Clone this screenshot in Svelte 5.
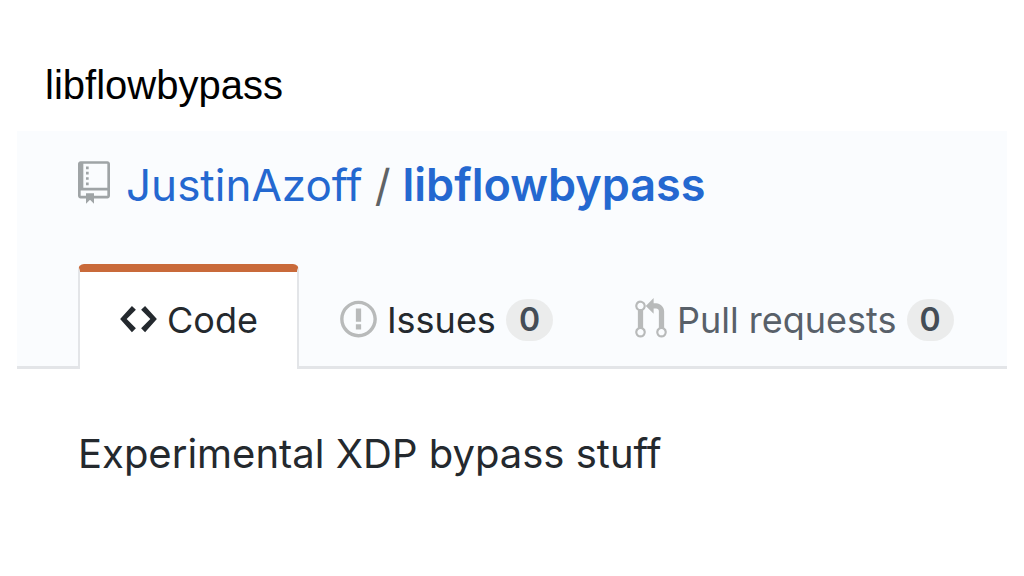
<script lang="ts">
  const owner = 'JustinAzoff';
  const repo = 'libflowbypass';
  const description = 'Experimental XDP bypass stuff';

  const tabs = [
    {
      id: 'code',
      label: 'Code',
      count: null,
      width: 14,
      icon: 'M9.5 3L8 4.5 11.5 8 8 11.5 9.5 13 14 8 9.5 3zm-5 0L0 8l4.5 5L6 11.5 2.5 8 6 4.5 4.5 3z',
    },
    {
      id: 'issues',
      label: 'Issues',
      count: 0,
      width: 14,
      icon: 'M7 2.3c3.14 0 5.7 2.56 5.7 5.7s-2.56 5.7-5.7 5.7A5.71 5.71 0 0 1 1.3 8c0-3.14 2.56-5.7 5.7-5.7zM7 1C3.14 1 0 4.14 0 8s3.14 7 7 7 7-3.14 7-7-3.14-7-7-7zm1 3H6v5h2V4zm0 6H6v2h2v-2z',
    },
    {
      id: 'pulls',
      label: 'Pull requests',
      count: 0,
      width: 12,
      icon: 'M11 11.28V5c-.03-.78-.34-1.47-.94-2.06C9.46 2.35 8.78 2.03 8 2H7V0L4 3l3 3V4h1c.27.02.48.11.69.31.21.2.3.42.31.69v6.28A1.993 1.993 0 0 0 10 15a1.993 1.993 0 0 0 1-3.72zm-1 2.92c-.66 0-1.2-.55-1.2-1.2 0-.65.55-1.2 1.2-1.2.65 0 1.2.55 1.2 1.2 0 .65-.55 1.2-1.2 1.2zM4 3c0-1.11-.89-2-2-2a1.993 1.993 0 0 0-1 3.72v6.56A1.993 1.993 0 0 0 2 15a1.993 1.993 0 0 0 1-3.72V4.72c.59-.34 1-.98 1-1.72zm-.8 10c0 .66-.55 1.2-1.2 1.2-.65 0-1.2-.55-1.2-1.2 0-.65.55-1.2 1.2-1.2.65 0 1.2.55 1.2 1.2zM2 4.2C1.34 4.2.8 3.65.8 3c0-.65.55-1.2 1.2-1.2.65 0 1.2.55 1.2 1.2 0 .65-.55 1.2-1.2 1.2z',
    },
  ];
</script>

<main>
  <h1>{repo}</h1>

  <section>
    <header>
      <div class="repo">
        <svg class="book" viewBox="0 0 12 16" aria-hidden="true">
          <path
            fill-rule="evenodd"
            d="M4 9H3V8h1v1zm0-3H3v1h1V6zm0-2H3v1h1V4zm0-2H3v1h1V2zm8-1v12c0 .55-.45 1-1 1H6v2l-1.5-1.5L3 16v-2H1c-.55 0-1-.45-1-1V1c0-.55.45-1 1-1h10c.55 0 1 .45 1 1zm-1 10H1v2h2v-1h3v1h5v-2zm0-10H2v9h9V1z"
          />
        </svg>
        <a href="#owner">{owner}</a>
        <span class="slash">/</span>
        <a class="name" href="#repo">{repo}</a>
      </div>

      <nav>
        {#each tabs as tab (tab.id)}
          <a class="tab {tab.id}" class:selected={tab.id === 'code'} href="#{tab.id}">
            <svg class:narrow={tab.width === 12} viewBox="0 0 {tab.width} 16" aria-hidden="true">
              <path fill-rule="evenodd" d={tab.icon} />
            </svg>
            <span>{tab.label}</span>
            {#if tab.count !== null}
              <span class="count">{tab.count}</span>
            {/if}
          </a>
        {/each}
      </nav>
    </header>

    <p>{description}</p>
  </section>
</main>

<style>
  :global(body) {
    margin: 0;
    background: #fff;
  }

  main {
    padding: 61px 17px 0;
    font-family: Inter, 'Liberation Sans', sans-serif;
  }

  h1 {
    margin: 0 0 22px;
    padding-left: 28px;
    font: 400 40px/48px 'Liberation Sans', Arial, sans-serif;
    color: #000;
  }

  header {
    padding-top: 26px;
    background: #fafcfe;
    border-bottom: 3px solid #e3e5e8;
  }

  .repo {
    display: flex;
    align-items: center;
    padding-left: 61px;
    font-size: 44px;
    line-height: 56px;
    white-space: nowrap;
  }

  a {
    color: #2468d0;
    text-decoration: none;
  }

  .name {
    font-size: 45px;
    font-weight: 600;
  }

  .slash {
    margin: 0 12px;
    color: #5f6366;
  }

  .book {
    width: 32px;
    height: 43px;
    margin: 0 16px 6px 0;
    fill: #9fa4a6;
  }

  nav {
    display: flex;
    margin: 51px 0 -3px;
    padding-left: 61px;
  }

  .tab {
    display: flex;
    align-items: center;
    box-sizing: border-box;
    height: 105px;
    padding: 6px 41px 0;
    font-size: 36px;
    line-height: 42px;
    color: #24292e;
    white-space: nowrap;
  }

  .tab svg {
    width: 37px;
    height: 42px;
    margin: 0 10px 2px 0;
    fill: #b8baba;
  }

  .tab svg.narrow {
    width: 32px;
  }

  .pulls {
    color: #586069;
  }

  .selected {
    padding: 0 39px 2px 40px;
    background: #fff;
    border: 2px solid #e3e5e8;
    border-width: 8px 2px 0;
    border-top-color: #c96a3a;
    border-radius: 6px 6px 0 0;
  }

  .tab.selected svg {
    fill: #24292e;
  }

  .count {
    margin-left: 10px;
    padding: 0 13px;
    border-radius: 21px;
    background: #ebecec;
    color: #444d56;
    font-size: 32px;
    font-weight: 600;
  }

  p {
    margin: 0;
    padding: 60px 61px;
    font-size: 40px;
    line-height: 50px;
    color: #24292e;
  }
</style>
